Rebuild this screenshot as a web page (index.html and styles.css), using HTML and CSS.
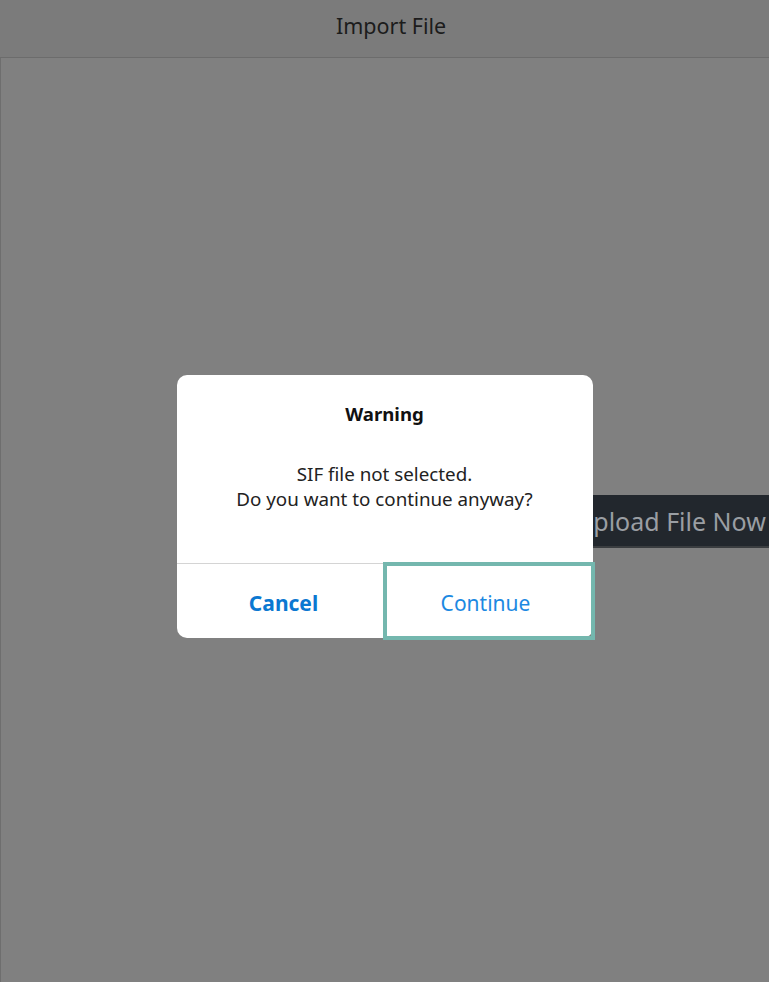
FILE: index.html
```html
<!DOCTYPE html>
<html lang="en">
<head>
	<meta charset="UTF-8">
	<title>Import File</title>
	<link rel="stylesheet" href="styles.css">
</head>
<body>
	<div class="page">
		<div class="topbar">Import File</div>
		<div class="content">
			<button class="upload-btn">Upload File Now</button>
		</div>
	</div>

	<!-- modal sits on top of the page -->
	<div class="overlay">
		<div class="dialog">
			<div class="dialog-body">
				<div class="dialog-title">Warning</div>
				<p class="dialog-text">SIF file not selected.<br>Do you want to continue anyway?</p>
			</div>
			<div class="dialog-actions">
				<button class="dialog-btn cancel">Cancel</button>
				<button class="dialog-btn continue">Continue</button>
			</div>
		</div>
	</div>
</body>
</html>
```

FILE: styles.css
```css
* {
	box-sizing: border-box;
}

html, body {
	margin: 0;
	padding: 0;
	height: 100%;
}

body {
	font-family: "Noto Sans", "Open Sans", sans-serif;
	background: #808080;
	overflow: hidden;
}

.page {
	display: flex;
	flex-direction: column;
	height: 100%;
}

.topbar {
	height: 58px;
	line-height: 52px;
	padding-left: 13px;
	text-align: center;
	font-size: 21.5px;
	color: #1c1c1c;
	background: #7b7b7b;
	border-bottom: 1px solid #6c6c6c;
}

.content {
	flex: 1;
	border-left: 1px solid #6e6e6e;
	padding-top: 437px;
	padding-left: 562px;
	white-space: nowrap;
}

.upload-btn {
	height: 53px;
	padding: 0 12px;
	border: 0;
	border-bottom: 2px solid #3a3d40;
	background: #22272d;
	color: #9a9ea3;
	font-family: inherit;
	font-size: 25px;
	white-space: nowrap;
}

.overlay {
	position: fixed;
	top: 0;
	left: 0;
	right: 0;
	bottom: 0;
	display: flex;
	justify-content: center;
	align-items: flex-start;
	padding-top: 375px;
}

.dialog {
	width: 416px;
	background: #fff;
	border-radius: 10px;
}

.dialog-body {
	height: 189px;
	padding-top: 26px;
	text-align: center;
	border-bottom: 1px solid #d4d4d4;
}

.dialog-title {
	font-size: 18.6px;
	font-weight: bold;
	color: #111;
	line-height: 26px;
}

.dialog-text {
	margin: 35px 0 0;
	font-size: 18.8px;
	line-height: 25px;
	color: #222;
}

.dialog-actions {
	display: flex;
	height: 74px;
}

.dialog-btn {
	width: 208px;
	border: 0;
	background: none;
	font-family: inherit;
	font-size: 21px;
	color: #1c89e2;
	padding: 4px 0 0;
}

.dialog-btn.cancel {
	font-weight: bold;
	color: #0b78d1;
	padding-left: 6px;
}

.dialog-btn.continue {
	outline: 4px solid #74b7ae;
	outline-offset: -2px;
	padding-right: 6px;
}
```
